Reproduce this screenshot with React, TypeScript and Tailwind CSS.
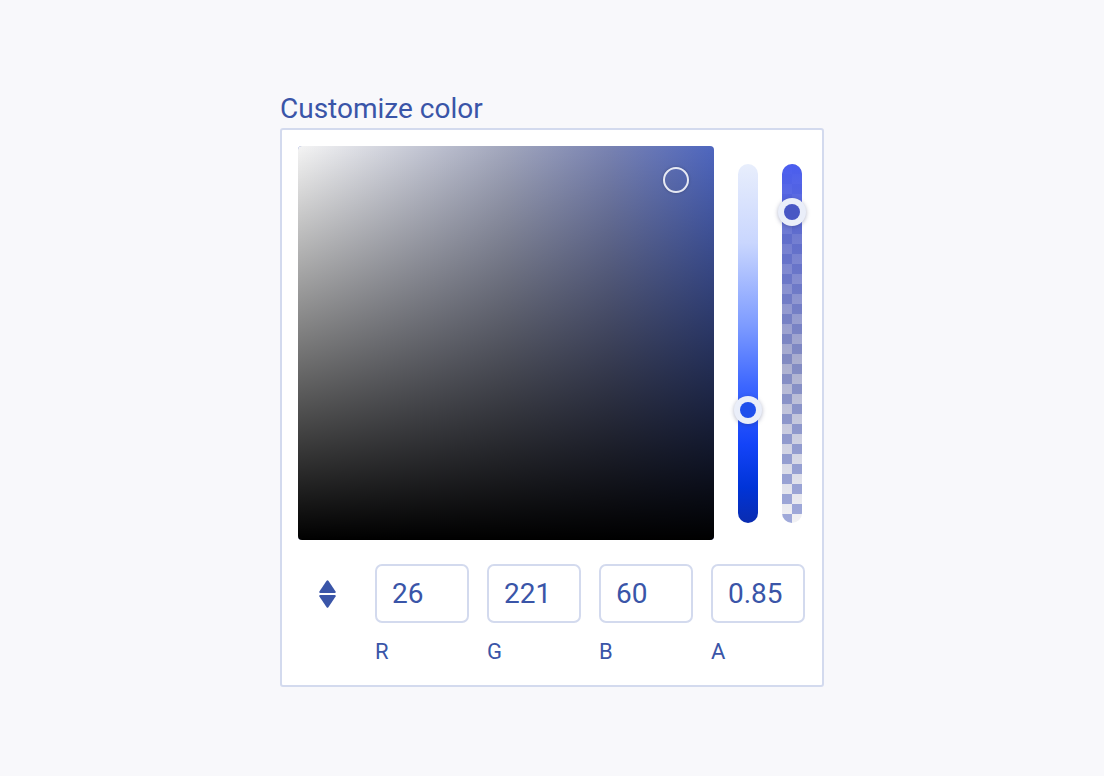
import React from "react";

const rows = Array.from({ length: 36 }, (_, i) => i);

function Thumb({ inner, className }: { inner: string; className: string }) {
  return (
    <div
      className={`absolute w-[28px] h-[28px] rounded-full bg-[#eaeef9] shadow-[0_1px_4px_rgba(40,50,100,0.35)] flex items-center justify-center ${className}`}
    >
      <div className={`w-[16px] h-[16px] rounded-full ${inner}`} />
    </div>
  );
}

export default function App() {
  const fields = [
    { v: "26", l: "R" },
    { v: "221", l: "G" },
    { v: "60", l: "B" },
    { v: "0.85", l: "A" },
  ];
  return (
    <div className="min-h-screen w-full bg-[#f8f8fb] flex justify-center pt-[93px] font-['Roboto',sans-serif] text-[#3a55a8]">
      <div className="flex flex-col">
        <h1 className="text-[28px] leading-[32px] font-normal mb-[3px]">Customize color</h1>
        <div className="w-[544px] bg-white border-2 border-[#d3daee] rounded-[3px] p-4 pb-[20px]">
          <div className="flex h-[394px]">
            <div className="relative w-[416px] h-full rounded-[4px] overflow-hidden bg-[#4e66bf]">
              <div className="absolute inset-0 bg-[linear-gradient(to_right,#f4f4f4,rgba(182,182,188,0.8)_50%,rgba(138,142,172,0.7)_75%,rgba(138,142,172,0)_100%)]" />
              <div className="absolute inset-0 bg-[linear-gradient(to_top,#000000,rgba(0,0,0,0))]" />
              <div className="absolute left-[365px] top-[21px] w-[26px] h-[26px] rounded-full border-2 border-[rgba(255,255,255,0.85)] shadow-[0_0_3px_rgba(0,0,0,0.25)]" />
            </div>
            <div className="relative ml-6 w-5 h-[359px] self-center rounded-full bg-[linear-gradient(to_bottom,#e8eefc_0%,#c9d6fe_22%,#7d9bff_45%,#3c66ff_62%,#1444f8_78%,#0034d8_90%,#0a2cb0_100%)]">
              <Thumb inner="bg-[#1f4fec]" className="left-[-4px] top-[232px]" />
            </div>
            <div className="relative ml-6 w-5 h-[359px] self-center">
              <div className="absolute inset-0 rounded-full overflow-hidden">
                <div className="flex flex-col">
                  {rows.map((r) => (
                    <div key={r} className="flex h-[10px]">
                      <div className={r % 2 === 0 ? "w-[10px] h-[10px] bg-[#f2f2f4]" : "w-[10px] h-[10px] bg-[#a0aada]"} />
                      <div className={r % 2 === 0 ? "w-[10px] h-[10px] bg-[#a0aada]" : "w-[10px] h-[10px] bg-[#f2f2f4]"} />
                    </div>
                  ))}
                </div>
                <div className="absolute inset-0 bg-[linear-gradient(to_bottom,#4a5df0_0%,rgba(80,94,200,0.8)_20%,rgba(100,108,170,0.5)_55%,rgba(130,136,180,0)_100%)]" />
              </div>
              <Thumb inner="bg-[#4857c4]" className="left-[-4px] top-[34px]" />
            </div>
          </div>
          <div className="grid grid-cols-[59px_repeat(4,94px)] gap-x-[18px] gap-y-[16px] mt-6">
            <div className="flex items-center justify-center">
              <svg width="17" height="28" viewBox="0 0 17 28" fill="#3a55a8">
                <path d="M7.6 0.8 Q8.5 -0.3 9.4 0.8 L16.6 11.6 Q17.2 13 15.6 13 L1.4 13 Q-0.2 13 0.4 11.6 Z" />
                <path d="M7.6 27.2 Q8.5 28.3 9.4 27.2 L16.6 16.4 Q17.2 15 15.6 15 L1.4 15 Q-0.2 15 0.4 16.4 Z" />
              </svg>
            </div>
            {fields.map((f) => (
              <div key={f.v} className="h-[59px] rounded-[7px] border-2 border-[#d3daee] flex items-center pl-[15px]">
                <input
                  readOnly
                  value={f.v}
                  className="w-full bg-transparent outline-none text-[28px] leading-[32px] text-[#3a55a8] font-['Roboto',sans-serif]"
                />
              </div>
            ))}
            <div />
            {fields.map((f) => (
              <div key={f.l} className="text-[22px] leading-[26px]">
                {f.l}
              </div>
            ))}
          </div>
        </div>
      </div>
    </div>
  );
}
